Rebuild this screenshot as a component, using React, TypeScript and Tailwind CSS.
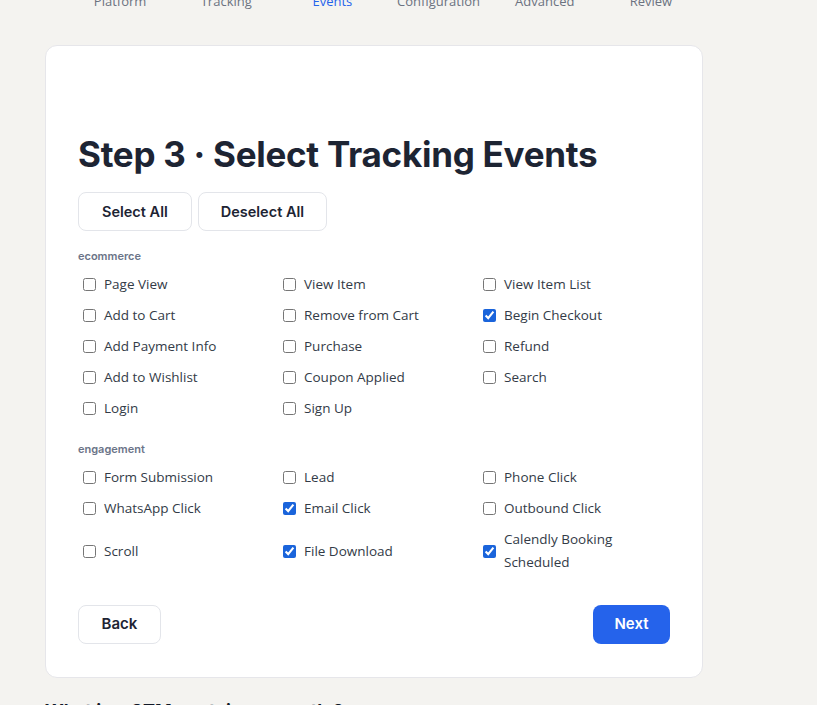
import React, { useState } from "react";

const steps = ["Platform", "Tracking", "Events", "Configuration", "Advanced", "Review"];

type EventItem = { label: string; checked?: boolean };

const groups: { name: string; items: EventItem[] }[] = [
  {
    name: "ecommerce",
    items: [
      { label: "Page View" },
      { label: "View Item" },
      { label: "View Item List" },
      { label: "Add to Cart" },
      { label: "Remove from Cart" },
      { label: "Begin Checkout", checked: true },
      { label: "Add Payment Info" },
      { label: "Purchase" },
      { label: "Refund" },
      { label: "Add to Wishlist" },
      { label: "Coupon Applied" },
      { label: "Search" },
      { label: "Login" },
      { label: "Sign Up" },
    ],
  },
  {
    name: "engagement",
    items: [
      { label: "Form Submission" },
      { label: "Lead" },
      { label: "Phone Click" },
      { label: "WhatsApp Click" },
      { label: "Email Click", checked: true },
      { label: "Outbound Click" },
      { label: "Scroll" },
      { label: "File Download", checked: true },
      { label: "Calendly Booking Scheduled", checked: true },
    ],
  },
];

const heading = { fontFamily: "Inter, 'Liberation Sans', sans-serif" };
const body = { fontFamily: "'Open Sans', 'Liberation Sans', sans-serif" };

const EventCheckbox = ({ item }: { item: EventItem }) => {
  const [checked, setChecked] = useState<boolean>(!!item.checked);
  return (
    <label className="flex items-center gap-[8px] pl-[5px] py-1 pr-2 cursor-pointer">
      <input
        type="checkbox"
        checked={checked}
        onChange={() => setChecked(!checked)}
        className="w-[13px] h-[13px] shrink-0 accent-[#1a64db]"
      />
      <span className="text-[13.5px] leading-[23px] text-[#333b47] max-w-[130px]" style={body}>
        {item.label}
      </span>
    </label>
  );
};

export default function App() {
  return (
    <div className="min-h-[705px] w-full bg-[#f4f3f0] overflow-hidden" style={heading}>
      <div className="w-[658px] ml-[45px]">
        {/* stepper labels, page is scrolled so only the bottom shows */}
        <div className="grid grid-cols-6 w-[637px] ml-[22px] mt-[-8px]">
          {steps.map((s) => (
            <div
              key={s}
              className={
                "text-center text-[13px] leading-[18px] " +
                (s === "Events" ? "text-[#2563eb] font-medium" : "text-[#6b7280]")
              }
              style={body}
            >
              {s}
            </div>
          ))}
        </div>

        <div className="mt-[35px] bg-white border border-[#e6e6ea] rounded-[12px] px-8 pt-[86px] pb-[33px]">
          <h1 className="text-[35px] leading-[44px] font-bold tracking-[-0.27px] text-[#1d2433]">
            Step 3 · Select Tracking Events
          </h1>

          <div className="flex gap-1.5 mt-[16px]">
            <button className="h-[39px] px-[23px] rounded-lg border border-[#e3e5ea] bg-white text-[14.5px] font-semibold text-[#1d2433]">
              Select All
            </button>
            <button className="h-[39px] px-[22px] rounded-lg border border-[#e3e5ea] bg-white text-[14.5px] font-semibold text-[#1d2433]">
              Deselect All
            </button>
          </div>

          <div className="mt-[17px] flex flex-col gap-[17px]">
            {groups.map((g) => (
              <div key={g.name}>
                <div className="text-[11px] leading-[16px] font-semibold text-[#6b7488] mb-[5px]">
                  {g.name}
                </div>
                <div className="grid grid-cols-3 gap-x-2 items-center">
                  {g.items.map((it) => (
                    <EventCheckbox key={it.label} item={it} />
                  ))}
                </div>
              </div>
            ))}
          </div>

          <div className="mt-[27px] flex justify-between">
            <button className="h-[39px] w-[83px] rounded-lg border border-[#e3e5ea] bg-white text-[15px] font-semibold text-[#1d2433]">
              Back
            </button>
            <button className="h-[39px] w-[77px] rounded-lg bg-[#2563eb] text-[15px] font-semibold text-white">
              Next
            </button>
          </div>
        </div>

        <h2 className="mt-[21px] text-[18px] leading-[24px] font-bold text-[#111827]">
          What is a GTM container, exactly?
        </h2>
      </div>
    </div>
  );
}
